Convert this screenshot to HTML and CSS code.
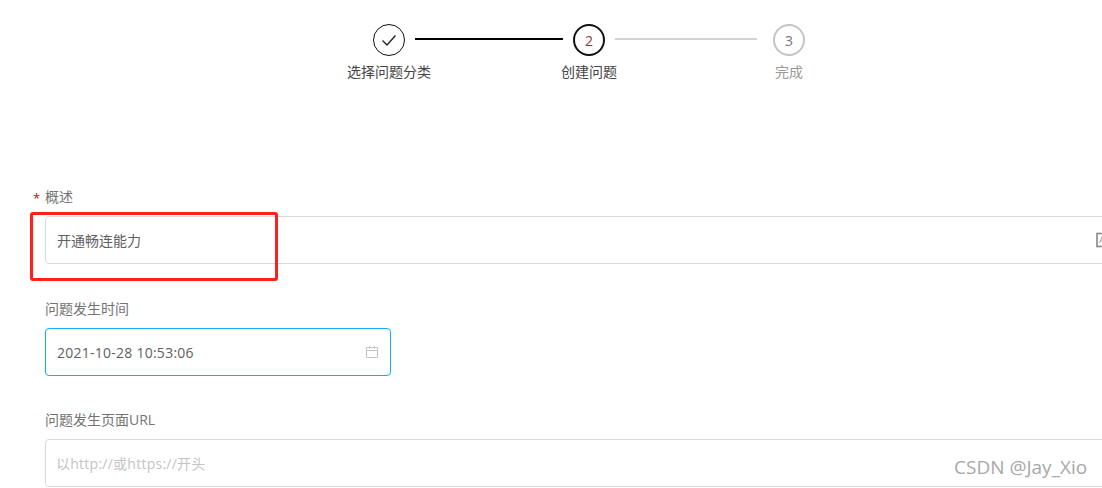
FILE: index.html
```html
<!DOCTYPE html>
<html lang="zh-CN">
<head>
  <meta charset="UTF-8">
  <title>创建问题</title>
  <link rel="stylesheet" href="styles.css">
</head>
<body>

  <div class="pasos">
    <div class="pista">
      <div class="circulo">
        <svg width="18" height="18" viewBox="0 0 18 18"><path d="M2.5 9.5 L7 14 L15.5 4.5" fill="none" stroke="#222" stroke-width="1.4"/></svg>
      </div>
      <div class="linea linea-hecha"></div>
      <div class="circulo circulo-activo">2</div>
      <div class="linea linea-pendiente"></div>
      <div class="circulo circulo-pendiente">3</div>
    </div>
    <div class="etiquetas">
      <div class="etiqueta">选择问题分类</div>
      <div class="etiqueta">创建问题</div>
      <div class="etiqueta etiqueta-pendiente">完成</div>
    </div>
  </div>

  <form class="formulario">
    <div class="campo">
      <label class="titulo titulo-requerido">概述</label>
      <div class="caja">
        <span class="texto">开通畅连能力</span>
        <svg class="icono-nota" width="12" height="16" viewBox="0 0 12 16"><rect x="1" y="1.5" width="12" height="13" fill="none" stroke="#888" stroke-width="1.6"/><path d="M3.5 11 L6 5 L8.5 11 M4 9 H8" fill="none" stroke="#aaa"/></svg>
      </div>
    </div>

    <div class="campo campo-fecha">
      <label class="titulo">问题发生时间</label>
      <div class="caja caja-fecha">
        <span class="texto texto-latino">2021-10-28 10:53:06</span>
        <svg class="icono-fecha" width="14" height="14" viewBox="0 0 14 14"><path d="M1.5 2.5 H12.5 V12.5 H1.5 Z M1.5 5.5 H12.5 M4.5 1 V3.5 M9.5 1 V3.5" fill="none" stroke="#c4c4c4"/></svg>
      </div>
    </div>

    <div class="campo">
      <label class="titulo">问题发生页面URL</label>
      <div class="caja">
        <span class="texto texto-latino texto-vacio">以http://或https://开头</span>
      </div>
    </div>
  </form>

  <div class="marca-roja"></div>
  <div class="marca-agua">CSDN @Jay_Xio</div>

</body>
</html>
```

FILE: styles.css
```css
html, body {
  height: 100%;
}

body {
  margin: 0;
  position: relative;
  overflow: hidden;
  background-color: #fff;
  font-family: "Open Sans", "Noto Sans CJK SC", sans-serif;
  font-size: 14px;
  color: #444;
}

.pasos {
  padding-top: 24px;
}

.pista {
  display: flex;
  padding-left: 373px;
}

.circulo {
  flex: none;
  width: 32px;
  height: 32px;
  box-sizing: border-box;
  border: 1.5px solid #111;
  border-radius: 50%;
  display: flex;
  align-items: center;
  justify-content: center;
}

.circulo-activo {
  border-width: 2px;
  color: #8a3a3a;
}

.circulo-pendiente {
  border-width: 2px;
  border-color: #c4c4c4;
  color: #777;
}

.linea {
  height: 2px;
  margin-top: 14px;
}

.linea-hecha {
  width: 148px;
  margin-left: 10px;
  margin-right: 10px;
  background-color: #000;
}

.linea-pendiente {
  width: 142px;
  margin-left: 10px;
  margin-right: 16px;
  background-color: #d2d2d2;
}

.etiquetas {
  display: flex;
  padding-left: 289px;
  margin-top: 6px;
}

.etiqueta {
  width: 200px;
  text-align: center;
  line-height: 20px;
}

.etiqueta-pendiente {
  color: #999;
}

.formulario {
  width: 1140px;
  margin-top: 105px;
  padding-left: 45px;
}

.campo {
  margin-bottom: 35px;
}

.campo-fecha {
  margin-bottom: 34px;
}

.campo:last-child {
  margin-bottom: 0;
}

.titulo {
  display: block;
  position: relative;
  line-height: 20px;
  margin-bottom: 9px;
  color: #737373;
}

.titulo-requerido::before {
  content: "*";
  position: absolute;
  left: -12px;
  top: 1px;
  font-size: 13px;
  color: #e60000;
}

.caja {
  height: 48px;
  box-sizing: border-box;
  border: 1px solid #d9d9d9;
  border-radius: 4px;
  padding: 0 11px;
  display: flex;
  align-items: center;
  justify-content: space-between;
}

.caja-fecha {
  width: 346px;
  border-color: #14aef5;
}

.texto {
  color: #606060;
}

.texto-latino {
  letter-spacing: 0.25px;
}

.texto-vacio {
  margin-left: -1px;
  color: #c4c4c4;
}

.icono-nota {
  margin-right: 65px;
}

.marca-roja {
  position: absolute;
  left: 30px;
  top: 212px;
  width: 248px;
  height: 69px;
  box-sizing: border-box;
  border: 3px solid #ff2018;
  border-radius: 3px;
}

.marca-agua {
  position: absolute;
  left: 954px;
  top: 454px;
  font-size: 19px;
  line-height: 26px;
  color: #a8a8a8;
}
```
